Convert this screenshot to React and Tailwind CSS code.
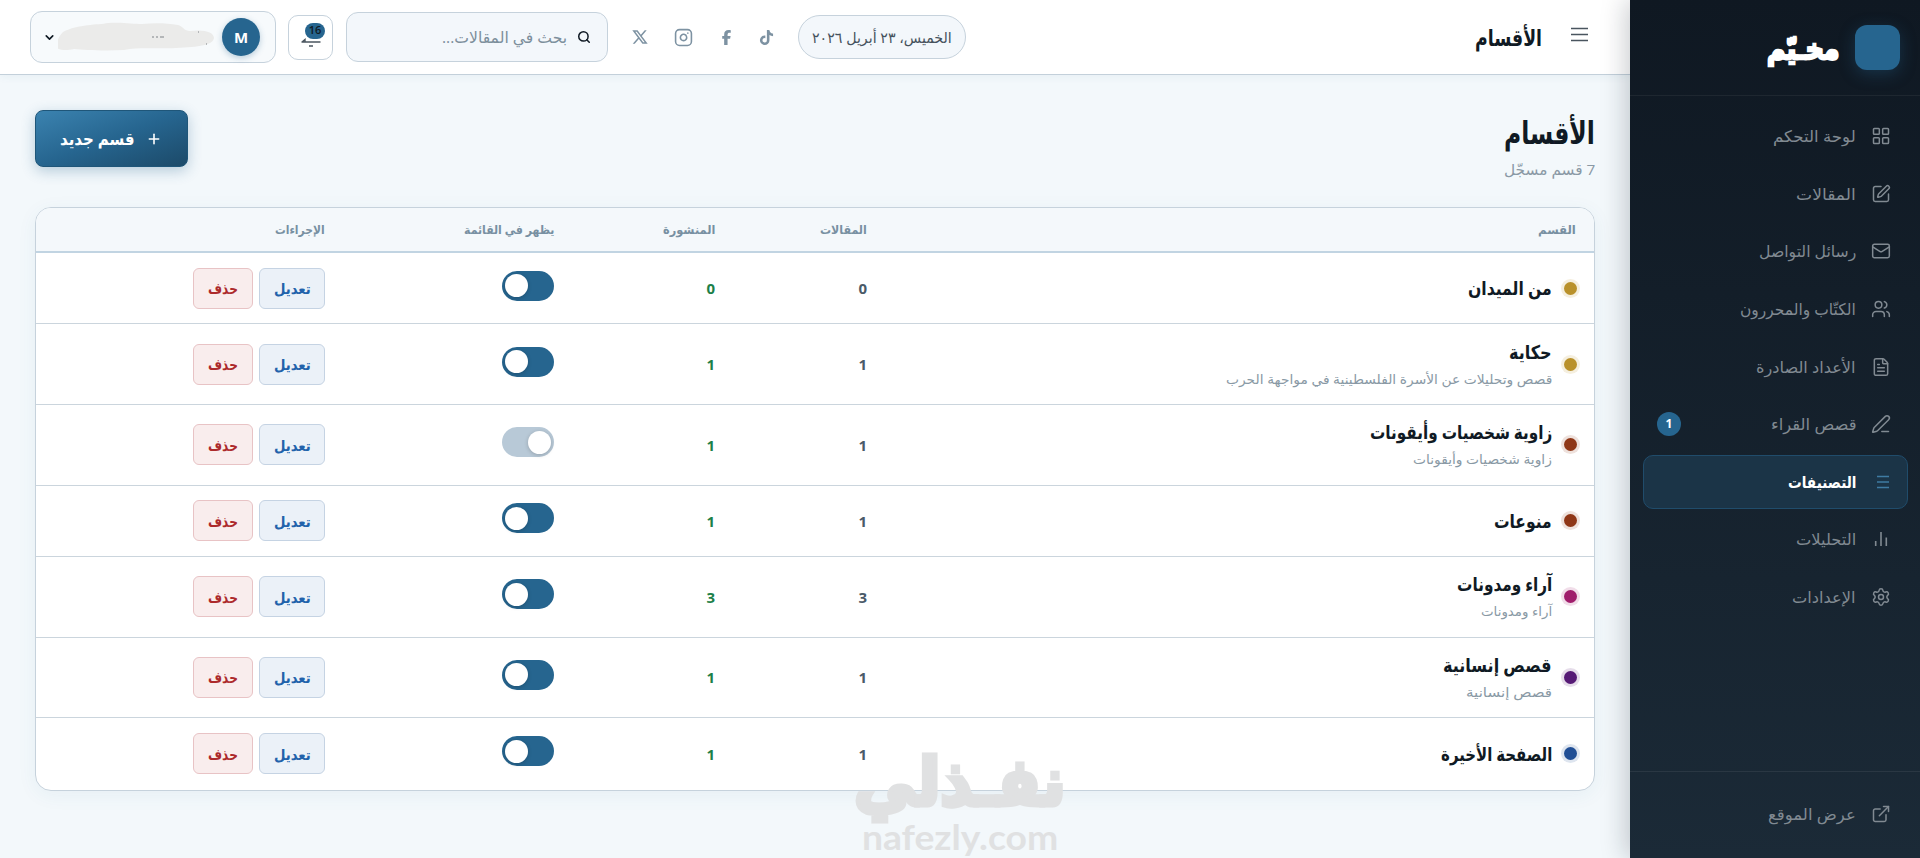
import { useLayoutEffect, useRef, useState } from "react";
import {
  ChevronDown,
  ExternalLink,
  FileText,
  Instagram,
  LayoutGrid,
  Mail,
  PenLine,
  Plus,
  Search,
  Settings,
  SquarePen,
  Users,
} from "lucide-react";
import { FaFacebookF, FaTiktok } from "react-icons/fa6";
import { RiTwitterXLine } from "react-icons/ri";

// Keeps a label at a fixed width whatever Arabic font the system picks
function FitText({ width, className = "", children }) {
  const ref = useRef(null);
  const [scale, setScale] = useState(1);

  useLayoutEffect(() => {
    if (ref.current) setScale(width / ref.current.offsetWidth);
  }, [width, children]);

  return (
    <span className={`inline-flex justify-start ${className}`} style={{ width }}>
      <span
        ref={ref}
        className="inline-block shrink-0 origin-right whitespace-nowrap"
        style={{ transform: `scaleX(${scale})` }}
      >
        {children}
      </span>
    </span>
  );
}

function ListIcon() {
  return (
    <svg viewBox="0 0 20 20" className="h-5 w-5" fill="none" stroke="currentColor" strokeWidth="1.5">
      <path d="M6 4.500h12M6 10h12M6 15.500h12" />
    </svg>
  );
}

function BarsIcon() {
  return (
    <svg viewBox="0 0 20 20" className="h-5 w-5" fill="none" stroke="currentColor" strokeWidth="1.6">
      <path d="M4.700 12v5M10 3v14M15.300 8.500v8.500" />
    </svg>
  );
}

const navItems = [
  { icon: LayoutGrid, label: "لوحة التحكم", width: 83 },
  { icon: SquarePen, label: "المقالات", width: 60 },
  { icon: Mail, label: "رسائل التواصل", width: 97 },
  { icon: Users, label: "الكتّاب والمحررون", width: 116 },
  { icon: FileText, label: "الأعداد الصادرة", width: 100 },
  { icon: PenLine, label: "قصص القراء", width: 86, badge: 1 },
  { icon: ListIcon, label: "التصنيفات", width: 68, active: true },
  { icon: BarsIcon, label: "التحليلات", width: 60 },
  { icon: Settings, label: "الإعدادات", width: 64 },
];

const sections = [
  { name: "من الميدان", width: 84, articles: 0, published: 0, visible: true, dot: "bg-[#b9912b] ring-[#b9912b]/15" },
  {
    name: "حكاية",
    width: 43,
    desc: "قصص وتحليلات عن الأسرة الفلسطينية في مواجهة الحرب",
    descWidth: 326,
    articles: 1,
    published: 1,
    visible: true,
    dot: "bg-[#b9912b] ring-[#b9912b]/15",
  },
  {
    name: "زاوية شخصيات وأيقونات",
    width: 182,
    desc: "زاوية شخصيات وأيقونات",
    descWidth: 139,
    articles: 1,
    published: 1,
    visible: false,
    dot: "bg-[#8f3717] ring-[#8f3717]/15",
  },
  { name: "منوعات", width: 58, articles: 1, published: 1, visible: true, dot: "bg-[#8f3717] ring-[#8f3717]/15" },
  {
    name: "آراء ومدونات",
    width: 95,
    desc: "آراء ومدونات",
    descWidth: 71,
    articles: 3,
    published: 3,
    visible: true,
    dot: "bg-[#a01d6c] ring-[#a01d6c]/15",
  },
  {
    name: "قصص إنسانية",
    width: 109,
    desc: "قصص إنسانية",
    descWidth: 86,
    articles: 1,
    published: 1,
    visible: true,
    dot: "bg-[#561a75] ring-[#561a75]/15",
  },
  { name: "الصفحة الأخيرة", width: 111, articles: 1, published: 1, visible: true, dot: "bg-[#214f95] ring-[#214f95]/15" },
];

function NavItem({ icon: Icon, label, width, badge, active }) {
  return (
    <a
      className={`flex h-[54.600px] items-center gap-[15px] rounded-[10px] border pr-[16px] pl-[13px] text-[16px] ${
        active
          ? "border-[#204c6b] bg-[#1b3447] font-bold text-white"
          : "border-transparent text-[#818a92]"
      }`}
    >
      <span className={active ? "text-[#3f7ba3]" : ""}>
        <Icon size={20} strokeWidth={1.8} />
      </span>
      <FitText width={width}>{label}</FitText>
      {badge && (
        <span className="mr-auto flex h-6 w-6 items-center justify-center rounded-full bg-[#26658f] text-xs font-bold text-white">
          {badge}
        </span>
      )}
    </a>
  );
}

function Sidebar() {
  return (
    <aside className="z-10 flex w-[290px] shrink-0 flex-col bg-linear-to-b from-[#0f1822] to-[#1b2a37] shadow-[-4px_0_24px_rgba(15,25,35,0.22)]">
      <div className="flex h-24 shrink-0 items-center gap-4 border-b border-white/6 pr-5">
        <div className="h-[45px] w-[45px] rounded-xl bg-[#26658f] shadow-[0_4px_16px_rgba(38,101,143,0.35)]" />
        <FitText width={72} className="text-[29px] leading-10 font-bold text-white [-webkit-text-stroke:2.5px_white]">
          مخـيّم
        </FitText>
      </div>
      <nav className="flex flex-1 flex-col gap-[3px] pt-[13px] pr-3 pl-[13px]">
        {navItems.map((item) => (
          <NavItem key={item.label} {...item} />
        ))}
      </nav>
      <div className="h-[87px] shrink-0 border-t border-white/7 px-3 pt-[15px]">
        <NavItem icon={ExternalLink} label="عرض الموقع" width={88} />
      </div>
    </aside>
  );
}

function Topbar() {
  return (
    <header className="flex h-[75px] shrink-0 items-center border-b border-[#c3d0da] bg-white pr-[42px] pl-[30px] shadow-[0_2px_8px_rgba(38,101,143,0.06)]">
      <svg viewBox="0 0 17 15" className="mb-[6px] h-[15px] w-[17px]" stroke="#4a555f" strokeWidth="1.6">
        <path d="M0 1.500h17M0 7.500h17M0 13.500h17" />
      </svg>
      <FitText width={67} className="mr-[29px] text-[23px] font-bold text-[#101a24]">
        الأقسام
      </FitText>
      <div className="mr-auto flex items-center">
        <div className="flex h-11 w-[168px] items-center justify-center rounded-full border border-[#c6d2dc] bg-[#f3f7fb] text-[15px] text-[#46525d]">
          <FitText width={140}>الخميس، ٢٣ أبريل ٢٠٢٦</FitText>
        </div>
        <div className="mr-[24px] flex w-[143px] items-center justify-between text-[#7d92a2]">
          <FaTiktok size={15} />
          <FaFacebookF size={15} />
          <Instagram size={19} />
          <RiTwitterXLine size={18} />
        </div>
        <div className="mr-[23px] flex h-[50px] w-[262px] items-center gap-[10px] rounded-xl border border-[#c6d2dc] bg-[#f3f7fb] pr-[16px] text-[16px] text-[#7d8f9c]">
          <Search size={14} strokeWidth={2.6} className="text-[#101a24]" />
          <FitText width={125}>بحث في المقالات...</FitText>
        </div>
        <div className="relative mr-[13px] flex h-[45px] w-[45px] items-center justify-center rounded-[10px] border border-[#c6d2dc] bg-white">
          <svg viewBox="0 0 20 20" className="mt-1 h-5 w-5" fill="none" stroke="#4a555f" strokeWidth="1.4">
            <path d="M0.500 13h19M1 13l3-2.500v2M8 17h4" />
          </svg>
          <span className="absolute top-[7px] left-[16px] flex h-[16px] w-5 items-center justify-center rounded-full bg-[#26658f] text-[11px] font-semibold text-[#101a24]">
            16
          </span>
        </div>
        <div className="mr-3 flex h-[52px] w-[246px] items-center rounded-xl border border-[#c6d2dc] bg-[#f7fafc] pr-[15px] pl-[12px]">
          <div className="flex h-[38px] w-[38px] items-center justify-center rounded-full bg-[#26658f] text-[15px] font-bold text-white shadow-[0_2px_6px_rgba(38,101,143,0.3)]">
            M
          </div>
          <svg viewBox="0 0 158 30" className="mr-[6px] h-[30px] w-[158px]">
            <path
              d="M5 10C20 2 40 3 50 1c15-1 25 1 34 1 12-1 24-1 36 1 6 2 6 6 12 6 14-2 24 1 24 7-1 7-15 9-38 10-24 1-36-1-52 2-20 1-40 0-50-1-8 2-14 1-18-1C-3 22 1 14 5 10Z"
              fill="#ebebea"
            />
            <path d="M94 15h2M98 15h2M102 15h4M140 10h1M148 22h1" stroke="#7c8186" strokeWidth="1" />
          </svg>
          <ChevronDown size={13} strokeWidth={3} className="mr-auto text-[#101a24]" />
        </div>
      </div>
    </header>
  );
}

function Toggle({ on }) {
  return (
    <span
      className={`mb-[5px] flex h-[30px] w-[52px] items-center rounded-full px-[3px] ${
        on ? "justify-end bg-[#26658f]" : "justify-start bg-[#b8c9d7]"
      }`}
    >
      <span className="h-[23px] w-[23px] rounded-full bg-white shadow-[0_1px_4px_rgba(0,0,0,0.2)]" />
    </span>
  );
}

function SectionsTable() {
  const cols = "grid grid-cols-[708px_152px_161px_229px_308px] items-center";

  return (
    <div className="mt-[23px] overflow-hidden rounded-2xl border border-[#c6d2dc] bg-white shadow-[0_4px_20px_rgba(38,101,143,0.06)]">
      <div className={`${cols} h-[45px] border-b-2 border-[#c1d4e2] bg-[#f4f8fb] text-[12px] font-bold text-[#7890a2] *:px-[19px]`}>
        <div className="-mr-px"><FitText width={38}>القسم</FitText></div>
        <div><FitText width={47}>المقالات</FitText></div>
        <div><FitText width={52}>المنشورة</FitText></div>
        <div><FitText width={90}>يظهر في القائمة</FitText></div>
        <div><FitText width={50}>الإجراءات</FitText></div>
      </div>
      {sections.map((s) => (
        <div
          key={s.name}
          className={`${cols} border-b border-[#cbd5dd] *:px-[19px] last:border-b-0 ${s.desc ? "h-[80.600px]" : "h-[71.400px]"}`}
        >
          <div className="flex items-center gap-[12px]">
            <span className={`-mr-[2px] h-[13px] w-[13px] rounded-full ring-3 ${s.dot}`} />
            <div className="flex flex-col gap-[5px]">
              <FitText width={s.width} className="text-[19px] leading-6 font-bold text-[#101a24]">
                {s.name}
              </FitText>
              {s.desc && (
                <FitText width={s.descWidth} className="text-[13px] leading-5 text-[#8999a5]">
                  {s.desc}
                </FitText>
              )}
            </div>
          </div>
          <div className="text-[15px] font-bold text-[#4a5a68]">{s.articles}</div>
          <div className="text-[15px] font-bold text-[#1c8048]">{s.published}</div>
          <div>
            <Toggle on={s.visible} />
          </div>
          <div className="flex gap-[6px]">
            <button className="flex h-[41px] w-[66px] items-center justify-center rounded-md border border-[#c5d3e3] bg-[#ebf1f8] text-[15px] font-bold text-[#2262ab]">
              <FitText width={37}>تعديل</FitText>
            </button>
            <button className="flex h-[41px] w-[60px] items-center justify-center rounded-md border border-[#e8c3c5] bg-[#f9eded] text-[15px] font-bold text-[#ad2a2c]">
              <FitText width={30}>حذف</FitText>
            </button>
          </div>
        </div>
      ))}
    </div>
  );
}

function Watermark() {
  return (
    <div className="pointer-events-none absolute top-[737px] left-[854px] z-20 flex w-[212px] flex-col items-center text-[#e0e1e2]">
      <FitText width={212} className="text-[66px] leading-[84px] font-bold [-webkit-text-stroke:5px_#e0e1e2]">
        نفـذلي
      </FitText>
      <FitText width={196} className="font-['Lato','DejaVu_Sans',sans-serif] text-[35px] leading-[30px] font-bold">
        nafezly.com
      </FitText>
    </div>
  );
}

export default function App() {
  return (
    <div
      dir="rtl"
      className="relative flex h-[858px] w-[1920px] overflow-hidden bg-[#f3f8fb] font-['Open_Sans','DejaVu_Sans',sans-serif]"
    >
      <Sidebar />
      <div className="flex w-[1630px] flex-col">
        <Topbar />
        <main className="px-[35px] pt-[35px]">
          <div className="flex items-start justify-between">
            <div className="flex flex-col">
              <FitText width={91} className="text-[31px] leading-[44px] font-bold text-[#101a24]">
                الأقسام
              </FitText>
              <FitText width={91} className="text-[15px] leading-[30px] text-[#8a99a5]">
                7 قسم مسجّل
              </FitText>
            </div>
            <button className="flex h-[57px] w-[153px] items-center gap-[12px] rounded-lg border border-[#1f5679] bg-linear-to-br from-[#3b83b0] via-[#26658f] to-[#1c4a69] pr-[25px] text-[17px] font-bold text-white shadow-[0_4px_14px_rgba(38,101,143,0.3)]">
              <Plus size={16} strokeWidth={2.4} />
              <FitText width={74}>قسم جديد</FitText>
            </button>
          </div>
          <SectionsTable />
        </main>
      </div>
      <Watermark />
    </div>
  );
}
